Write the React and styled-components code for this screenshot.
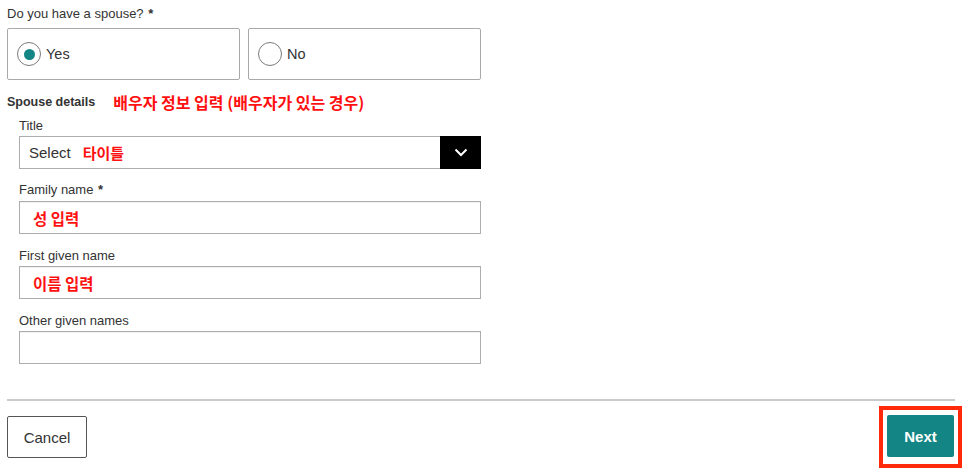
import React from 'react'
import styled, { createGlobalStyle } from 'styled-components'

const Global = createGlobalStyle`
  body {
    margin: 0;
    background: #ffffff;
    font-family: "Liberation Sans", Arial, sans-serif;
    color: #333333;
  }
`

const Page = styled.div`
  width: 966px;
  height: 475px;
  padding: 6px 0 0 7px;
  box-sizing: border-box;
  overflow: hidden;
`

const Question = styled.div`
  font-size: 13px;
  line-height: 16px;
  height: 16px;
  margin-bottom: 6px;
  color: #333;
`

const Required = styled.span`
  font-weight: bold;
  margin-left: 1px;
`

const RadioRow = styled.div`
  display: grid;
  grid-template-columns: 233px 233px;
  gap: 8px;
  width: 474px;
`

const RadioBox = styled.label`
  display: flex;
  align-items: center;
  height: 52px;
  box-sizing: border-box;
  border: 1px solid #a9a9a9;
  border-radius: 2px;
  padding-left: 9px;
  gap: 5px;
  font-size: 14.5px;
  color: #333;
`

const Circle = styled.span`
  width: 24px;
  height: 24px;
  box-sizing: border-box;
  border: 1px solid #7a7a7a;
  border-radius: 50%;
  display: flex;
  align-items: center;
  justify-content: center;

  &::after {
    content: '';
    width: 11px;
    height: 11px;
    border-radius: 50%;
    background: ${props => (props.checked ? '#138584' : 'transparent')};
  }
`

const SectionTitle = styled.div`
  display: flex;
  align-items: center;
  gap: 18px;
  margin-top: 14px;
  height: 16px;
  font-size: 12.5px;
  font-weight: bold;
  color: #333;
`

const Note = styled.span`
  font-family: "Noto Sans CJK KR", "Liberation Sans", sans-serif;
  font-weight: bold;
  font-size: ${props => props.size || 15}px;
  color: #ff1010;
`

const Fields = styled.div`
  padding-left: 12px;
  width: 462px;
`

const Field = styled.div`
  margin-top: ${props => props.top || 14}px;
`

const Label = styled.div`
  font-size: 13px;
  line-height: 16px;
  height: 16px;
  margin-bottom: ${props => props.gap || 3}px;
  color: #333;
`

const Input = styled.div`
  display: flex;
  align-items: center;
  height: 33px;
  box-sizing: border-box;
  border: 1px solid #adadad;
  box-shadow: inset 0 1px 1px rgba(0, 0, 0, 0.06);
  padding-left: 13px;
`

const Select = styled.div`
  display: flex;
  align-items: stretch;
  height: 33px;
  box-sizing: border-box;
  border: 1px solid #adadad;
`

const SelectValue = styled.div`
  flex: 1;
  display: flex;
  align-items: center;
  gap: 12px;
  padding-left: 9px;
  font-size: 15px;
  color: #333;
`

const Arrow = styled.div`
  width: 41px;
  margin: -1px -1px -1px 0;
  background: #000;
  display: flex;
  align-items: center;
  justify-content: center;
`

const Divider = styled.div`
  margin-top: 35px;
  width: 948px;
  border-top: 2px solid #cbcbcb;
`

const Footer = styled.div`
  display: flex;
  justify-content: space-between;
  align-items: flex-start;
  width: 947px;
  margin-top: 15px;
`

const CancelButton = styled.button`
  width: 80px;
  height: 42px;
  background: #fff;
  border: 1px solid #555;
  border-radius: 2px;
  font-family: "Liberation Sans", Arial, sans-serif;
  font-size: 15px;
  color: #333;
  cursor: pointer;
`

const Highlight = styled.div`
  border: 4px solid #ff2a0a;
  padding: 5px 4px 7px 4px;
  margin: -10px -8px 0 0;
`

const NextButton = styled.button`
  display: block;
  width: 67px;
  height: 42px;
  background: #138584;
  border: none;
  border-radius: 2px;
  font-family: "Liberation Sans", Arial, sans-serif;
  font-size: 15px;
  font-weight: bold;
  color: #fff;
  cursor: pointer;
`

export default function App() {
  return (
    <Page>
      <Global />
      <Question>
        Do you have a spouse?<Required> *</Required>
      </Question>
      <RadioRow>
        <RadioBox>
          <Circle checked />
          Yes
        </RadioBox>
        <RadioBox>
          <Circle />
          No
        </RadioBox>
      </RadioRow>

      <SectionTitle>
        Spouse details
        <Note size={16}>배우자 정보 입력 (배우자가 있는 경우)</Note>
      </SectionTitle>

      <Fields>
        <Field top={8}>
          <Label gap={2}>Title</Label>
          <Select>
            <SelectValue>
              Select
              <Note>타이틀</Note>
            </SelectValue>
            <Arrow>
              <svg width="14" height="9" viewBox="0 0 14 9">
                <path d="M1.5 1.5 L7 7 L12.5 1.5" stroke="#fff" strokeWidth="2" fill="none" />
              </svg>
            </Arrow>
          </Select>
        </Field>
        <Field top={13}>
          <Label gap={3}>
            Family name<Required> *</Required>
          </Label>
          <Input>
            <Note size={15.5}>성 입력</Note>
          </Input>
        </Field>
        <Field top={14}>
          <Label gap={2}>First given name</Label>
          <Input>
            <Note size={15.5}>이름 입력</Note>
          </Input>
        </Field>
        <Field top={14}>
          <Label gap={2}>Other given names</Label>
          <Input />
        </Field>
      </Fields>

      <Divider />
      <Footer>
        <CancelButton>Cancel</CancelButton>
        <Highlight>
          <NextButton>Next</NextButton>
        </Highlight>
      </Footer>
    </Page>
  )
}
